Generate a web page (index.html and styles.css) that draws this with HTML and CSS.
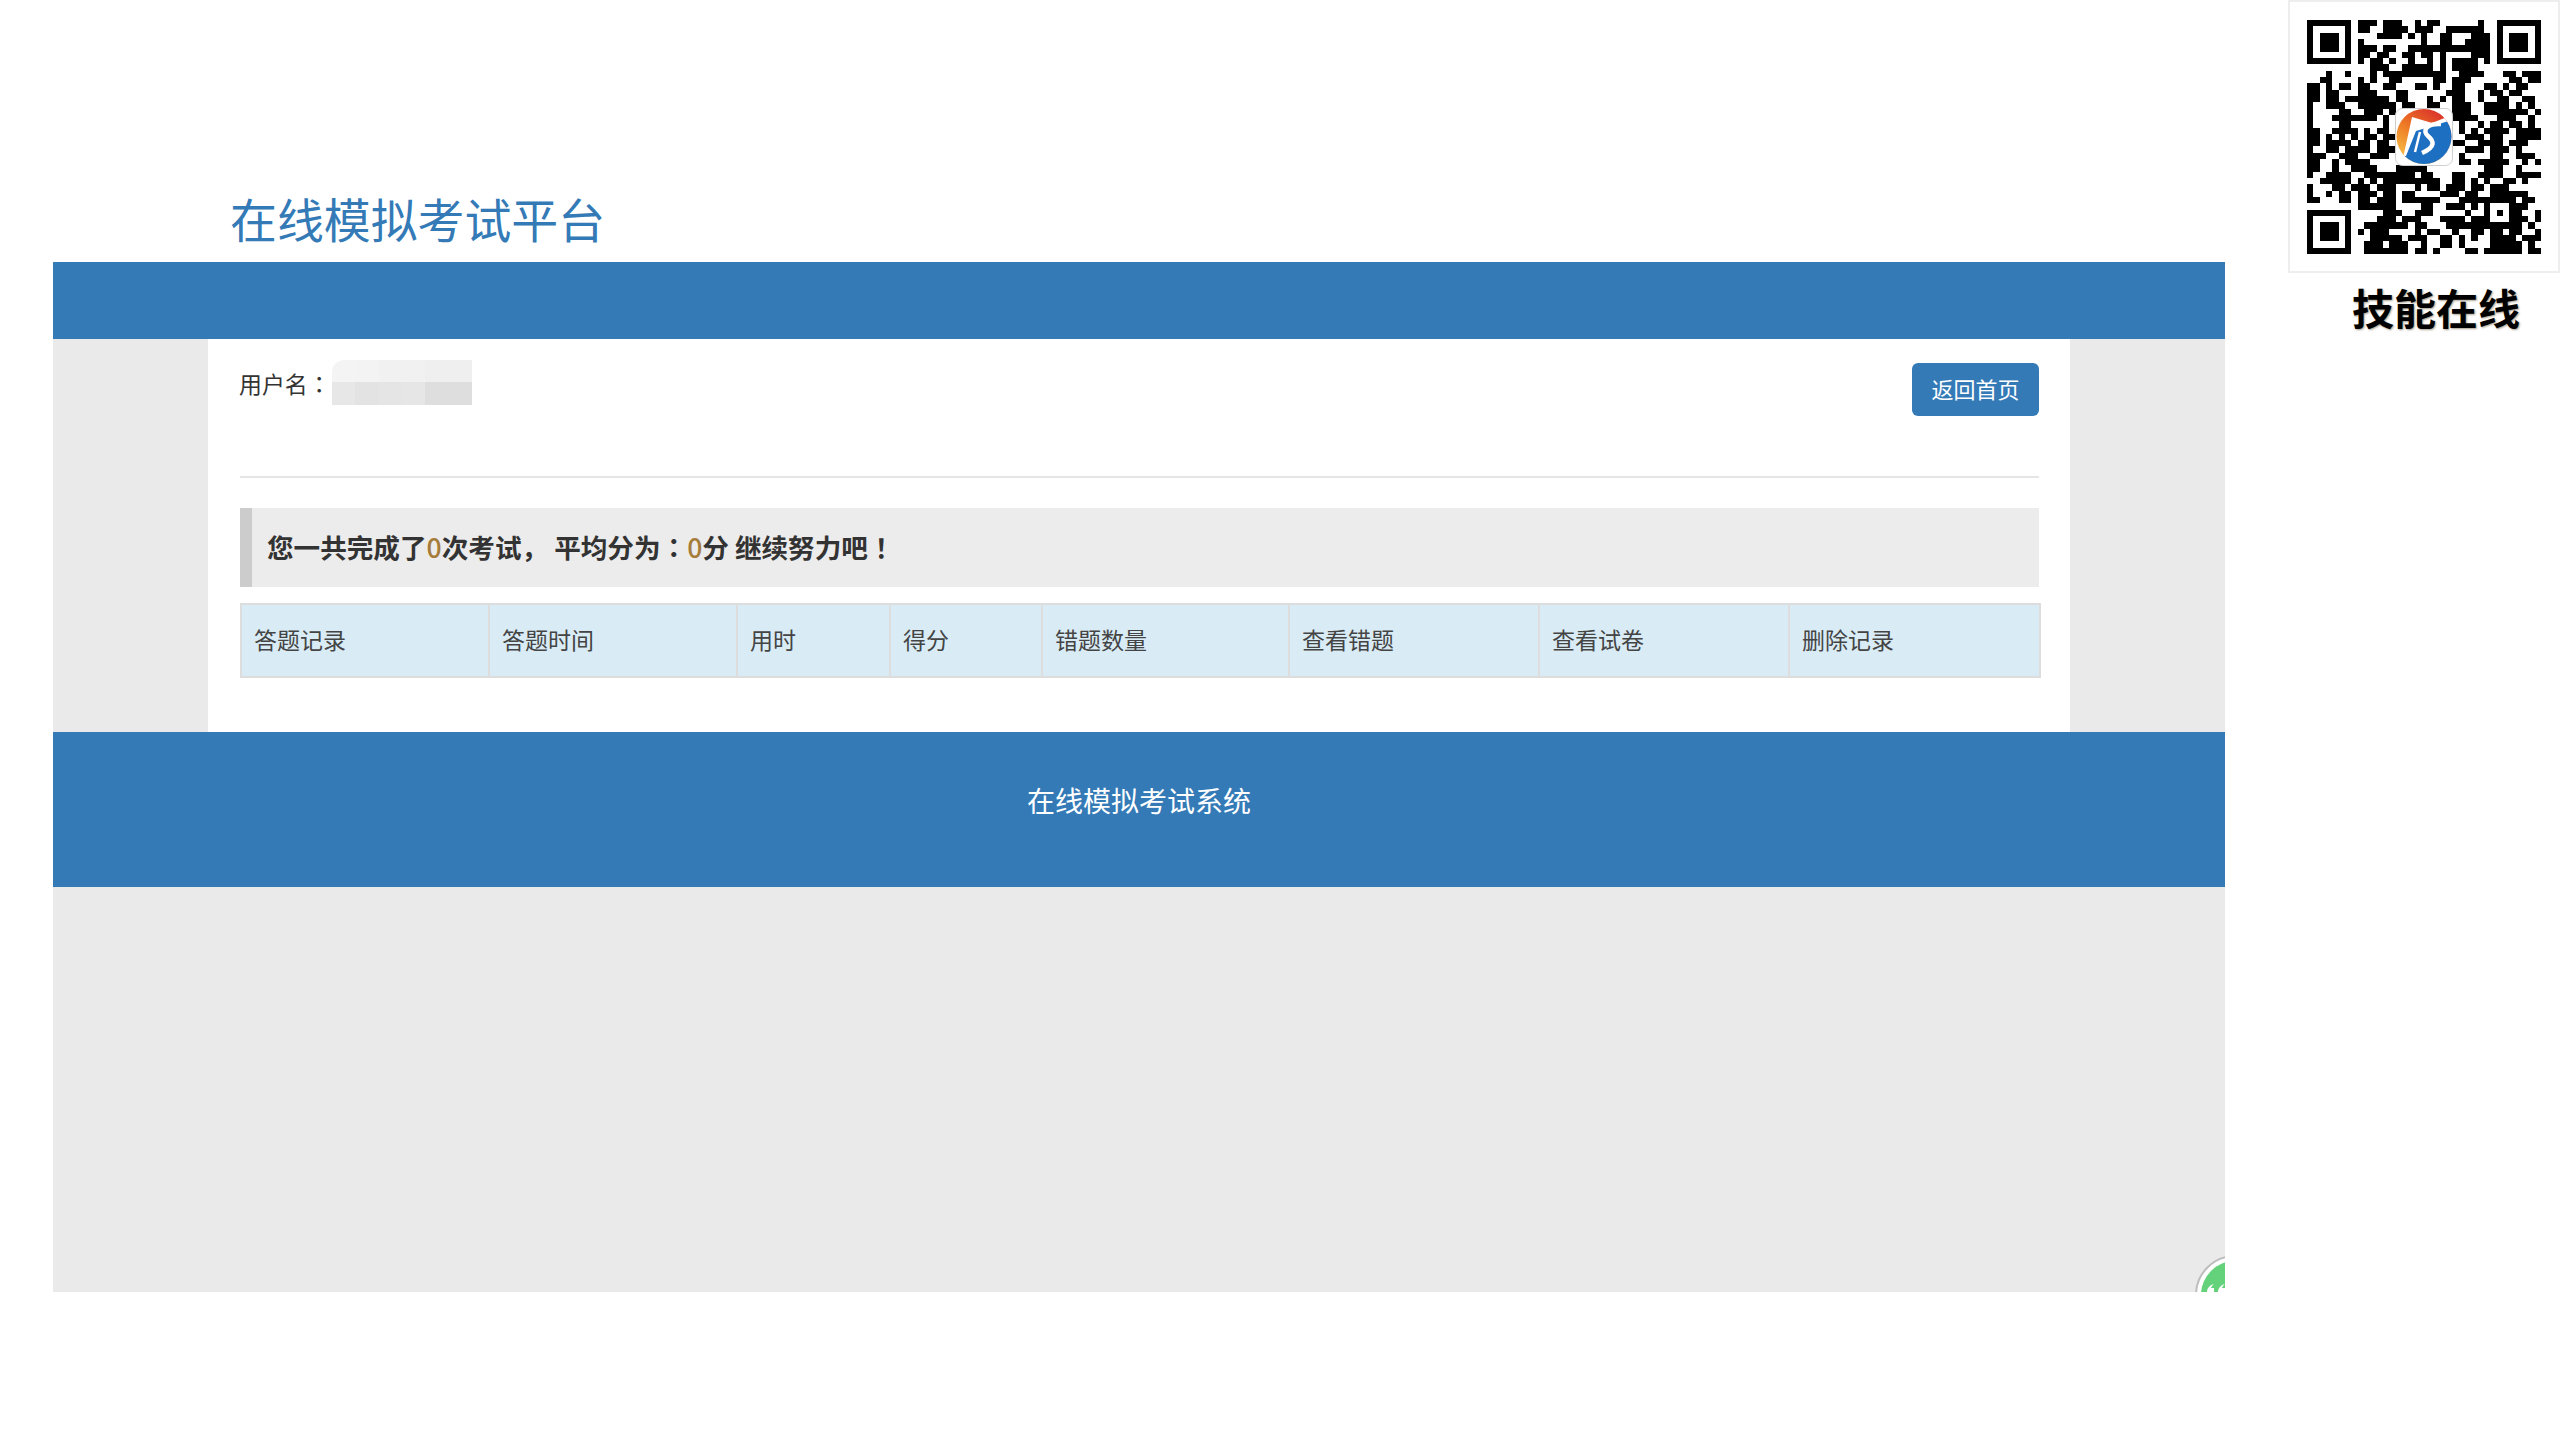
FILE: index.html
```html
<!DOCTYPE html>
<html lang="zh-CN">
<head>
<meta charset="utf-8">
<title>在线模拟考试平台</title>
<link rel="stylesheet" href="styles.css">
</head>
<body>
<div class="page">
  <main class="main">
    <header class="brand"><h1 class="brand-title">在线模拟考试平台</h1></header>
    <div class="shell">
      <div class="topbar"></div>
      <section class="card">
        <div class="user-row">
          <div class="user">
            <span class="user-label">用户名<span class="punct" lang="zh-TW">：</span></span>
            <span class="mosaic" aria-hidden="true">
              <i class="t1"></i><i class="t2"></i><i class="t3"></i><i class="t3"></i><i class="t4"></i><i class="t4"></i>
              <i class="b1"></i><i class="b2"></i><i class="b3"></i><i class="b4"></i><i class="b5"></i><i class="b5"></i>
            </span>
          </div>
          <a class="btn-home">返回首页</a>
        </div>
        <div class="summary">您一共完成了<span class="num">0</span>次考试<span class="punct">，</span> 平均分为<span class="punct" lang="zh-TW">：</span><span class="num">0</span>分 继续努力吧<span class="punct" lang="zh-TW">！</span></div>
        <table class="records">
          <colgroup>
            <col class="w-248"><col class="w-248"><col class="w-153"><col class="w-152"><col class="w-247"><col class="w-250"><col class="w-250"><col class="w-251">
          </colgroup>
          <thead>
            <tr><th>答题记录</th><th>答题时间</th><th>用时</th><th>得分</th><th>错题数量</th><th>查看错题</th><th>查看试卷</th><th>删除记录</th></tr>
          </thead>
        </table>
      </section>
      <footer class="footer">在线模拟考试系统</footer>
      <svg class="chat-bubble" viewBox="0 0 80 80" aria-hidden="true">
        <circle cx="40" cy="40" r="39" fill="#fff" stroke="#bdbdbd" stroke-width="2"/>
        <circle cx="40" cy="40" r="34" fill="#63d27a"/>
        <circle cx="32" cy="15" r="2" fill="#d8f5de"/>
        <path d="M12 37c0-4 3-7 7-8-2 2-3 3-3 4h3v4zM23 37c0-4 3-7 7-8-2 2-3 3-3 4h3v4z" fill="#fff"/>
      </svg>
    </div>
  </main>
  <aside class="side">
    <div class="qr-box">
      <svg class="qr" viewBox="0 0 37 37" aria-hidden="true" shape-rendering="crispEdges">
        <path class="qr-solid" d="M0 0h7v7h-7zM1 1v5h5v-5zM2 2h3v3h-3zM30 0h7v7h-7zM31 1v5h5v-5zM32 2h3v3h-3zM0 30h7v7h-7zM1 31v5h5v-5zM2 32h3v3h-3zM28 28h5v5h-5zM29 29v3h3v-3zM30 30h1v1h-1z" fill-rule="evenodd"/>
        <path class="qr-runs" d="M8 .5h3M12 .5h3M17 .5h1M19 .5h2M27 .5h1
        M8 1.5h2M12 1.5h4M17 1.5h3M22 1.5h4M26 1.5h2
        M11 2.5h4M16 2.5h1M18 2.5h1M21 2.5h2M26 2.5h3
        M8 3.5h1M18 3.5h1M21 3.5h2M25 3.5h4
        M8 4.5h3M12 4.5h2M16 4.5h10M26 4.5h3
        M8 5.5h2M11 5.5h2M15 5.5h2M18 5.5h2M21 5.5h1M26 5.5h3
        M8 6.5h1M10 6.5h2M13 6.5h1M16 6.5h1M19 6.5h1M21 6.5h1M23 6.5h2M25 6.5h2M28 6.5h1
        M10 7.5h3M15 7.5h4M19 7.5h1M21 7.5h1M23 7.5h4
        M3 8.5h1M6 8.5h1M10 8.5h1M12 8.5h10M24 8.5h4M31 8.5h2M34 8.5h3
        M2 9.5h2M8 9.5h1M10 9.5h1M13 9.5h2M20 9.5h2M23 9.5h3M32 9.5h2M35 9.5h2
        M0 10.5h2M3 10.5h1M5 10.5h2M8 10.5h2M12 10.5h2M17 10.5h2M20 10.5h1M23 10.5h2M28 10.5h2M31 10.5h1M33 10.5h2
        M0 11.5h2M3 11.5h2M8 11.5h3M14 11.5h2M22 11.5h3M27 11.5h1M29 11.5h2M32 11.5h2
        M0 12.5h2M3 12.5h2M6 12.5h5M11 12.5h2M14 12.5h2M19 12.5h1M21 12.5h1M23 12.5h2M27 12.5h1M30 12.5h2M34 12.5h2
        M0 13.5h1M3 13.5h3M8 13.5h6M15 13.5h2M19 13.5h2M23 13.5h3M28 13.5h4M33 13.5h1M35 13.5h1
        M0 14.5h1M5 14.5h2M9 14.5h3M13 14.5h1M23 14.5h3M28 14.5h6M34 14.5h1M36 14.5h1
        M0 15.5h1M4 15.5h2M6 15.5h5M12 15.5h1M23 15.5h4M30 15.5h3M35 15.5h1
        M0 16.5h1M5 16.5h2M12 16.5h1M24 16.5h1M27 16.5h1M29 16.5h2M32 16.5h2M35 16.5h1
        M0 17.5h2M4 17.5h4M9 17.5h1M11 17.5h2M24 17.5h1M26 17.5h1M28 17.5h4M33 17.5h4
        M0 18.5h2M3 18.5h1M5 18.5h1M7 18.5h1M9 18.5h2M12 18.5h2M25 18.5h3M29 18.5h2M33 18.5h4
        M0 19.5h2M3 19.5h4M8 19.5h2M11 19.5h2M23 19.5h2M27 19.5h4M32 19.5h3
        M0 20.5h1M3 20.5h2M6 20.5h4M11 20.5h3M25 20.5h3M29 20.5h3M33 20.5h1
        M0 21.5h3M5 21.5h3M10 21.5h3M24 21.5h1M29 21.5h2M33 21.5h3
        M0 22.5h2M4 22.5h1M6 22.5h4M24 22.5h2M27 22.5h5M34 22.5h1M36 22.5h1
        M0 23.5h2M4 23.5h1M7 23.5h2M9 23.5h2M14 23.5h5M28 23.5h3M33 23.5h1
        M0 24.5h1M3 24.5h3M6 24.5h1M9 24.5h8M18 24.5h2M23 24.5h2M27 24.5h4M33 24.5h4
        M2 25.5h5M8 25.5h1M10 25.5h1M12 25.5h7M19 25.5h2M23 25.5h2M26 25.5h1M28 25.5h1M31 25.5h2M34 25.5h1
        M0 26.5h1M4 26.5h2M7 26.5h3M11 26.5h3M17 26.5h1M19 26.5h2M22 26.5h3M26 26.5h2M29 26.5h3
        M0 27.5h1M3 27.5h1M5 27.5h2M8 27.5h3M12 27.5h2M15 27.5h2M21 27.5h3M25 27.5h2M29 27.5h6
        M0 28.5h2M5 28.5h2M8 28.5h2M11 28.5h3M15 28.5h6M24 28.5h4M34 28.5h2
        M8 29.5h4M12 29.5h2M18 29.5h2M22 29.5h3M26 29.5h1M33 29.5h2
        M12 30.5h3M17 30.5h3M25 30.5h1M33 30.5h1M36 30.5h1
        M11 31.5h3M15 31.5h3M21 31.5h4M26 31.5h2M33 31.5h2M36 31.5h1
        M9 32.5h2M11 32.5h5M17 32.5h2M22 32.5h4M26 32.5h2M33 32.5h1M35 32.5h1
        M8 33.5h1M10 33.5h3M17 33.5h1M19 33.5h2M23 33.5h1M26 33.5h2M29 33.5h2M32 33.5h2M36 33.5h1
        M10 34.5h5M16 34.5h3M21 34.5h2M24 34.5h1M26 34.5h1M29 34.5h4M34 34.5h3
        M9 35.5h3M13 35.5h3M18 35.5h1M21 35.5h2M24 35.5h1M29 35.5h5M35 35.5h1
        M9 36.5h6M15 36.5h1M17 36.5h2M20 36.5h1M25 36.5h2M28 36.5h6M35 36.5h2"/>
      </svg>
      <svg class="qr-logo" viewBox="0 0 58 58" aria-hidden="true">
        <defs>
          <linearGradient id="warm" x1="0.7" y1="0" x2="0.1" y2="0.9">
            <stop offset="0" stop-color="#d9302a"/>
            <stop offset="0.5" stop-color="#ee7a25"/>
            <stop offset="1" stop-color="#f8c54a"/>
          </linearGradient>
          <clipPath id="disc"><circle cx="29" cy="28.5" r="27.5"/></clipPath>
        </defs>
        <rect x="0.5" y="0.5" width="57" height="57" rx="7" fill="#fff" stroke="#cfcfcf"/>
        <g clip-path="url(#disc)">
          <rect width="58" height="58" fill="url(#warm)"/>
          <path d="M17 9 37 15 52 9 58 20V50H8z" fill="#fff"/>
          <path d="M21 23 57 12V58H0V48H11z" fill="#1d6fc1"/>
          <path d="M25 24 20 44" fill="none" stroke="#fff" stroke-width="2.5"/>
          <path d="M46 16C31 15 27 23 33 28 39 33 41 39 27 45" fill="none" stroke="#fff" stroke-width="4.5"/>
        </g>
      </svg>
    </div>
    <div class="qr-label">技能在线</div>
  </aside>
</div>
</body>
</html>
```

FILE: styles.css
```css
* { box-sizing: border-box; }
html, body { margin: 0; padding: 0; background: #fff; }
body {
  width: 2560px;
  height: 1440px;
  overflow: hidden;
  font-family: "Noto Sans CJK SC", "Liberation Sans", sans-serif;
  color: #333;
}
.page { display: flex; align-items: flex-start; }
.main { width: 2172px; margin-left: 53px; flex: none; }
.brand {
  height: 262px;
  display: flex;
  align-items: flex-end;
  padding: 0 0 14px 177px;
}
.brand-title {
  margin: 0;
  font-size: 46.9px;
  line-height: 60px;
  font-weight: 400;
  color: #337ab7;
}
.shell {
  position: relative;
  height: 1030px;
  background: #eaeaea;
  overflow: hidden;
}
.topbar { height: 77px; background: #337ab7; }
.card {
  height: 393px;
  margin: 0 155px;
  padding: 0 31px 0 32px;
  background: #fff;
}
.user-row {
  height: 139px;
  padding-top: 24px;
  display: flex;
  justify-content: space-between;
  align-items: flex-start;
  border-bottom: 2px solid #e6e6e6;
}
.user { display: flex; align-items: flex-start; margin-top: -3px; }
.user-label {
  width: 92px;
  margin: 0 0 0 -1px;
  font-size: 22.9px;
  line-height: 46px;
  color: #333;
  white-space: nowrap;
}
.punct { font-family: "Noto Sans CJK TC", "Noto Sans CJK SC", sans-serif; }
.mosaic {
  width: 140px;
  height: 45px;
  margin-left: 1px;
  display: grid;
  grid-template-columns: repeat(6, 1fr);
  grid-template-rows: 22px 23px;
}
.t1 { background: #f4f4f4; border-top-left-radius: 12px; }
.t2 { background: #f3f3f3; }
.t3 { background: #f1f1f1; }
.t4 { background: #efefef; }
.b1 { background: #e7e7e7; }
.b2 { background: #e3e3e3; }
.b3 { background: #e5e5e5; }
.b4 { background: #e6e6e6; }
.b5 { background: #dedede; }
.btn-home {
  width: 127px;
  height: 53px;
  border-radius: 6px;
  background: #337ab7;
  color: #fff;
  font-size: 22px;
  line-height: 51px;
  text-align: center;
}
.summary {
  height: 79px;
  margin-top: 30px;
  padding-left: 15px;
  background: #ececec;
  border-left: 12px solid #ccc;
  font-size: 26.6px;
  font-weight: 700;
  line-height: 77px;
  color: #333;
  white-space: pre-wrap;
}
.num { color: #a67c3a; font-weight: 500; }
.records {
  width: 100%;
  height: 75px;
  margin-top: 16px;
  border-collapse: collapse;
  table-layout: fixed;
}
.w-248 { width: 248px; }
.w-153 { width: 153px; }
.w-152 { width: 152px; }
.w-247 { width: 247px; }
.w-250 { width: 250px; }
.w-251 { width: 251px; }
.records th {
  padding: 0 12px 4px;
  background: #d9ecf6;
  border: 2px solid #ddd;
  font-size: 23px;
  font-weight: 400;
  text-align: left;
  color: #444;
}
.footer {
  height: 155px;
  padding-top: 48px;
  background: #337ab7;
  color: #fff;
  font-size: 28px;
  line-height: 40px;
  text-align: center;
}
.chat-bubble {
  position: absolute;
  right: -50px;
  bottom: -43px;
  width: 80px;
  height: 80px;
}
.side { width: 272px; margin-left: 63px; flex: none; }
.qr-box {
  position: relative;
  height: 273px;
  padding: 18px 0 0 17px;
  background: #fff;
  border: 2px solid #eee;
}
.qr { display: block; width: 234px; height: 234px; }
.qr-solid { fill: #000; }
.qr-runs { fill: none; stroke: #000; stroke-width: 1; }
.qr-logo {
  position: absolute;
  left: 105px;
  top: 106px;
  width: 58px;
  height: 58px;
}
.qr-label {
  margin-top: 8px;
  padding-left: 64px;
  font-size: 42px;
  line-height: 52px;
  font-weight: 700;
  color: #000;
  text-shadow: 1px 1px 2px rgba(60, 40, 0, .45);
  white-space: nowrap;
}
```
